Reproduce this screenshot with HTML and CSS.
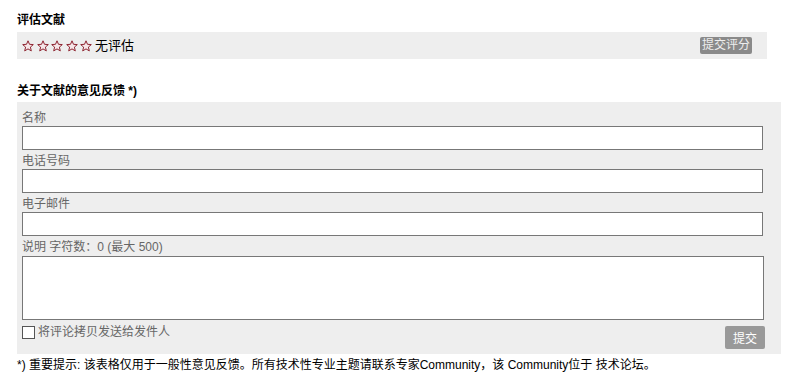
FILE: index.html
```html
<!DOCTYPE html>
<html>
<head>
    <meta charset="utf-8">
    <link rel="stylesheet" href="styles.css">
</head>
<body>
    <!-- rating -->
    <div class="fb-heading">评估文献</div>
    <div class="fb-rating">
        <div class="fb-stars">
            <svg class="fb-star" viewBox="0 0 12 12"><path d="M6 0.8 L7.5 4.3 L11.3 4.6 L8.4 7.1 L9.3 10.9 L6 8.9 L2.7 10.9 L3.6 7.1 L0.7 4.6 L4.5 4.3 Z"/></svg>
            <svg class="fb-star" viewBox="0 0 12 12"><path d="M6 0.8 L7.5 4.3 L11.3 4.6 L8.4 7.1 L9.3 10.9 L6 8.9 L2.7 10.9 L3.6 7.1 L0.7 4.6 L4.5 4.3 Z"/></svg>
            <svg class="fb-star" viewBox="0 0 12 12"><path d="M6 0.8 L7.5 4.3 L11.3 4.6 L8.4 7.1 L9.3 10.9 L6 8.9 L2.7 10.9 L3.6 7.1 L0.7 4.6 L4.5 4.3 Z"/></svg>
            <svg class="fb-star" viewBox="0 0 12 12"><path d="M6 0.8 L7.5 4.3 L11.3 4.6 L8.4 7.1 L9.3 10.9 L6 8.9 L2.7 10.9 L3.6 7.1 L0.7 4.6 L4.5 4.3 Z"/></svg>
            <svg class="fb-star" viewBox="0 0 12 12"><path d="M6 0.8 L7.5 4.3 L11.3 4.6 L8.4 7.1 L9.3 10.9 L6 8.9 L2.7 10.9 L3.6 7.1 L0.7 4.6 L4.5 4.3 Z"/></svg>
            <span class="fb-rating-text">无评估</span>
        </div>
        <button class="fb-btn fb-btn-small">提交评分</button>
    </div>

    <!-- feedback form -->
    <div class="fb-heading fb-heading-gap">关于文献的意见反馈 *)</div>
    <form class="fb-form">
        <label class="fb-label">名称</label>
        <input class="fb-input" type="text">
        <label class="fb-label">电话号码</label>
        <input class="fb-input" type="text">
        <label class="fb-label">电子邮件</label>
        <input class="fb-input" type="text">
        <label class="fb-label">说明 字符数：0 (最大 500)</label>
        <textarea class="fb-textarea"></textarea>
        <div class="fb-actions">
            <label class="fb-check"><span class="fb-box"></span>将评论拷贝发送给发件人</label>
            <button class="fb-btn fb-btn-submit" type="button">提交</button>
        </div>
    </form>

    <div class="fb-note">*) 重要提示: 该表格仅用于一般性意见反馈。所有技术性专业主题请联系专家Community，该 Community位于 技术论坛。</div>
</body>
</html>
```

FILE: styles.css
```css
body {
    margin: 0;
    padding: 12px 0 0 17px;
    font-family: "Liberation Sans", "Noto Sans CJK SC", sans-serif;
    font-size: 12px;
    color: #000;
    background: #fff;
}

.fb-heading {
    font-weight: bold;
    line-height: 16px;
    margin-bottom: 4px;
}

.fb-heading-gap {
    margin-top: 23px;
    padding-top: 1px;
    margin-bottom: 3px;
}

/* rating bar */
.fb-rating {
    width: 750px;
    height: 27px;
    box-sizing: border-box;
    padding: 0 15px 0 5px;
    background: #eee;
    display: flex;
    align-items: center;
    justify-content: space-between;
}

.fb-stars {
    display: flex;
    align-items: center;
    gap: 2.5px;
}

.fb-star {
    width: 12px;
    height: 12px;
    fill: #f6e6e8;
    stroke: #8e2430;
    stroke-width: 1;
    stroke-linejoin: miter;
}

.fb-rating-text {
    margin-left: 0.5px;
    font-size: 13px;
    line-height: 16px;
}

.fb-btn {
    border: none;
    border-radius: 2px;
    color: #fff;
    font-family: inherit;
    font-size: 12px;
    padding: 0;
    cursor: pointer;
}

.fb-btn-small {
    width: 52px;
    height: 17px;
    line-height: 17px;
    background: #8a8a8a;
    color: #eee;
}

/* form */
.fb-form {
    width: 764px;
    box-sizing: border-box;
    margin: 0;
    padding: 5px 18px 5px 5px;
    background: #eee;
    display: flex;
    flex-direction: column;
}

.fb-label {
    color: #666;
    padding-top: 3px;
    line-height: 16px;
    height: 16px;
}

.fb-input {
    box-sizing: border-box;
    width: 741px;
    height: 24px;
    margin: 0;
    border: 1px solid #777;
    background: #fff;
}

.fb-textarea {
    box-sizing: border-box;
    width: 742px;
    height: 64px;
    margin: 1px 0 0;
    border: 1px solid #777;
    background: #fff;
    resize: none;
}

.fb-actions {
    margin-top: 6px;
    display: flex;
    justify-content: space-between;
    align-items: flex-start;
}

.fb-check {
    display: flex;
    align-items: center;
    color: #666;
    line-height: 13px;
    font-size: 12px;
}

.fb-box {
    width: 13px;
    height: 13px;
    box-sizing: border-box;
    border: 1px solid #555;
    background: #fff;
    margin-right: 3px;
}

.fb-btn-submit {
    width: 40px;
    height: 23px;
    margin-right: -2px;
    background: #999;
}

.fb-note {
    line-height: 22px;
}
```
